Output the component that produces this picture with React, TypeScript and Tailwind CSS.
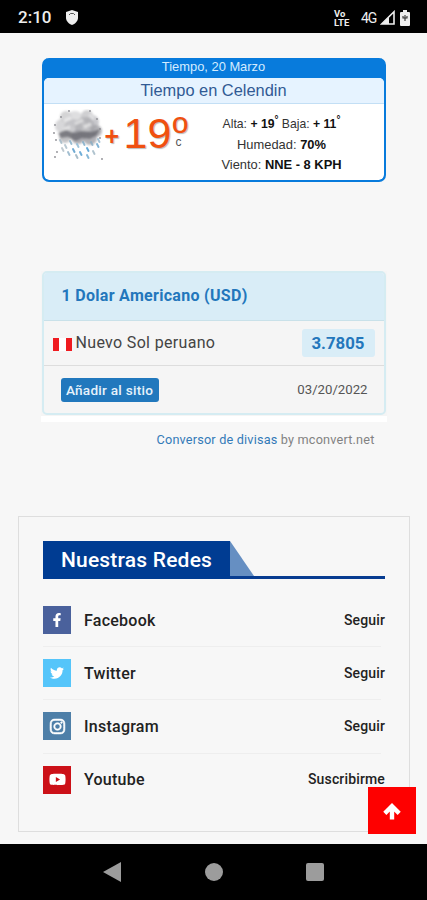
import type { ReactNode } from "react";
import { FaFacebookF, FaInstagram, FaTwitter, FaYoutube } from "react-icons/fa";

const networks: { name: string; action: string; color: string; icon: ReactNode }[] = [
  { name: "Facebook", action: "Seguir", color: "bg-[#4a619c]", icon: <FaFacebookF size={14} /> },
  { name: "Twitter", action: "Seguir", color: "bg-[#55c5fa]", icon: <FaTwitter size={14} /> },
  { name: "Instagram", action: "Seguir", color: "bg-[#4e7fa8]", icon: <FaInstagram size={17} stroke="white" strokeWidth={18} /> },
  { name: "Youtube", action: "Suscribirme", color: "bg-[#cc1118]", icon: <FaYoutube size={17} /> }
];

const puffs = [
  [13, 8, 6, "#c9c9cb"],
  [22, 10, 8, "#d6d6d8"],
  [34, 7, 6, "#c3c3c6"],
  [39, 13, 7, "#bcbcc0"],
  [9, 17, 7, "#cdcdd0"],
  [20, 19, 9, "#bebec2"],
  [32, 18, 10, "#b0b0b4"],
  [43, 22, 6, "#a2a2a8"],
  [12, 28, 6, "#b4b4b8"],
  [25, 28, 7, "#9a9aa0"],
  [37, 29, 7, "#a0a0a6"]
] as const;

const drops = [
  [7, 31, "#9fb6c4"], [12, 36, "#a9bcc8"], [17, 32, "#7fabc6"], [20, 40, "#4d96c7"],
  [24, 35, "#89b6d1"], [27, 43, "#4c9acf"], [30, 33, "#7aa9c7"], [34, 39, "#3d94cf"],
  [38, 33, "#88adc4"], [40, 42, "#9db5c3"], [44, 35, "#62a1ca"], [15, 43, "#8baec5"],
  [23, 46, "#94adbb"], [34, 46, "#6aa7cf"], [9, 39, "#b1bec6"], [45, 30, "#8fb4cb"]
] as const;

const specks = [[2, 16], [1, 24], [44, 10], [47, 20], [4, 43], [2, 48], [49, 50], [8, 8], [47, 29], [3, 31], [37, 2], [16, 2]];

function RainCloud() {
  return (
    <svg width="52" height="52" viewBox="0 0 52 52" className="mt-[5px] ml-[9px] shrink-0">
      <defs>
        <filter id="soft" x="-20%" y="-20%" width="140%" height="140%">
          <feGaussianBlur stdDeviation="1" />
        </filter>
      </defs>
      <g filter="url(#soft)">
        {puffs.map(([x, y, r, fill], i) => (
          <circle key={i} cx={x} cy={y} r={r} fill={fill} opacity=".8" />
        ))}
        <path d="m5 24 8-3 8 3 9-2 8 1 9-3-3 6-7 4-8-1-6 3-8-4-7 1Z" fill="#62626a" opacity=".72" />
        <path d="m11 12 7-3m4 6 8-4m-19 9 6-2m14 0 7-3m-2-9 5 4" fill="none" stroke="#f2f2f3" strokeWidth="3" opacity=".65" />
      </g>
      {drops.map(([x, y, stroke], i) => (
        <path key={i} d={`M${x} ${y}l1.5 3`} stroke={stroke} strokeWidth="1.9" strokeLinecap="round" opacity=".8" />
      ))}
      {specks.map(([x, y], i) => (
        <circle key={i} cx={x} cy={y} r=".9" fill="#8c8c92" />
      ))}
    </svg>
  );
}

function StatusBar() {
  return (
    <header className="flex h-[33px] shrink-0 items-center bg-black pt-[2px] pr-[17px] pl-[18px] text-[#eeeeee]">
      <span className="w-[48px] text-[17px] leading-none font-medium">2:10</span>
      <svg width="12" height="15" viewBox="0 0 12 15">
        <path d="M6 0 12 2v6c0 3-3 6-6 7-3-1-6-4-6-7V2Z" fill="#eee" />
        <path d="m3 5 1.5-1.5h3L9 5" fill="none" stroke="#444" strokeWidth=".9" />
      </svg>
      <div className="ml-auto flex items-center">
        <div className="flex h-[18px] w-[27px] flex-col text-[9.5px] leading-[9px] font-bold">
          <span>Vo</span>
          <span>LTE</span>
        </div>
        <span className="w-[19px] text-[14px] leading-none tracking-[-1px]">4G</span>
        <svg width="15" height="15" viewBox="0 0 15 15">
          <path d="M14 1.8V14H1.6Z" fill="none" stroke="#eee" strokeWidth="1.6" />
          <path d="M9 7v7H2Z" fill="#eee" />
        </svg>
        <svg width="10" height="16" viewBox="0 0 10 16" className="ml-[5px]">
          <path d="M3 0h4v2h2q1 0 1 1v12q0 1-1 1H1q-1 0-1-1V3q0-1 1-1h2Z" fill="#eee" />
          <path d="M5 5v6M3 6v2h4V6" fill="none" stroke="#333" strokeWidth="1.1" />
        </svg>
      </div>
    </header>
  );
}

function Weather() {
  return (
    <section className="mx-auto mt-[25px] h-[124px] w-[344px] shrink-0 overflow-hidden rounded-[7px] border-2 border-t-0 border-[#087bdc] bg-[#087bdc] font-['Liberation_Sans']">
      <div className="h-[20px] text-center text-[12.9px] leading-[17px] text-[#d4ecff]">Tiempo, 20 Marzo</div>
      <div className="h-[102px] overflow-hidden rounded-[5px] bg-white">
        <h2 className="h-[26px] border-b border-[#c3dff5] bg-[#e6f3ff] text-center text-[16.4px] leading-[25px] text-[#315a94]">Tiempo en Celendin</h2>
        <div className="flex">
          <RainCloud />
          <div className="flex w-[98px] text-[#f05010] [text-shadow:1px_1px_1px_#bbb]">
            <span className="mt-[16px] w-[19px] text-[25px] leading-[32px] font-bold">+</span>
            <span className="mt-[7px] w-[49px] text-[43px] leading-[44px]">19</span>
            <span className="mt-[9px] flex w-[16px] flex-col">
              <span className="h-[22px] text-[42px] leading-[38px]">º</span>
              <span className="pl-[3px] text-[12px] leading-[14px] text-[#555] [text-shadow:none]">c</span>
            </span>
          </div>
          <div className="mt-[10px] ml-auto w-[171px] pr-[33px] text-center text-[12.9px] leading-[20.5px] whitespace-nowrap text-[#333] [&_b]:text-[#111]">
            <p className="-mx-[5px] text-[12.2px]">Alta: <b>+ 19<sup className="text-[10px]">°</sup></b> Baja: <b>+ 11<sup className="text-[10px]">°</sup></b></p>
            <p>Humedad: <b>70%</b></p>
            <p>Viento: <b>NNE - 8 KPH</b></p>
          </div>
        </div>
      </div>
    </section>
  );
}

function Converter() {
  return (
    <section className="mx-auto mt-[89px] w-[346px] shrink-0">
      <div className="h-[151px] bg-white">
        <div className="h-[145px] bg-[#f5f5f5]">
          <div className="mx-px h-[144px] overflow-hidden rounded-[5px] border-2 border-[#d5ecf2]">
            <h2 className="h-[48px] border-b border-[#c9e1e9] bg-[#d9edf7] pl-[18px] text-[16px] leading-[46px] font-bold tracking-[0.3px] text-[#2377bc]">1 Dolar Americano (USD)</h2>
            <div className="flex h-[45px] items-center border-b border-[#dddddd] pr-[9px] pl-[9px]">
              <span className="mt-[2px] mr-[4px] flex h-[13px] w-[19px] bg-white">
                <i className="mr-auto w-[6px] bg-[#ef1b20]" />
                <i className="w-[6px] bg-[#ef1b20]" />
              </span>
              <span className="text-[16px] tracking-[0.33px] text-[#444]">Nuevo Sol peruano</span>
              <b className="ml-auto h-[28px] w-[73px] rounded-[3px] bg-[#d9edf7] text-center text-[16.8px] leading-[28px] text-[#2377bc]">3.7805</b>
            </div>
            <div className="flex h-[47px] items-center pr-[16px] pl-[17px]">
              <button className="h-[24px] w-[98px] rounded-[3px] bg-[#2178bd] text-[13.6px] leading-[24px] font-medium tracking-[0.25px] whitespace-nowrap text-[#e6f2fb]">Añadir al sitio</button>
              <span className="mt-px ml-auto text-[13.2px] text-[#555]">03/20/2022</span>
            </div>
          </div>
        </div>
      </div>
      <p className="mt-[8px] pr-[12px] text-right text-[12.7px] leading-[20px] tracking-[0.18px] text-[#828282]">
        <span className="text-[#337ab7]">Conversor de divisas</span> by mconvert.net
      </p>
    </section>
  );
}

function Networks() {
  return (
    <section className="mt-[66px] mr-[17px] ml-[18px] h-[316px] shrink-0 border border-[#dedede] px-[24px] pt-[24px]">
      <div className="flex h-[38px] border-b-[3px] border-[#073c91]">
        <h2 className="h-[38px] w-[187px] bg-[#003c92] text-center text-[21px] leading-[38px] font-medium tracking-[0.2px] text-white">Nuestras Redes</h2>
        <svg width="24" height="35" viewBox="0 0 24 35">
          <path d="M0 0 24 35H0Z" fill="#668fc2" />
        </svg>
      </div>
      <ul className="mt-[15px]">
        {networks.map((network) => (
          <li key={network.name} className="mr-[4px] flex h-[53.2px] items-center border-b border-[#eeeeee] last:border-0 last:pb-px">
            <span className={`grid size-[28px] place-items-center text-white ${network.color}`}>{network.icon}</span>
            <span className="mt-px ml-[13px] text-[16px] font-medium tracking-[0.25px] text-[#222]">{network.name}</span>
            <span className="-mr-[4px] ml-auto text-[14px] font-medium tracking-[0.15px] text-[#222]">{network.action}</span>
          </li>
        ))}
      </ul>
    </section>
  );
}

export default function App() {
  return (
    <main className="relative flex h-[900px] w-[427px] flex-col overflow-hidden bg-[#f7f7f7] font-[Roboto,sans-serif]">
      <StatusBar />
      <Weather />
      <Converter />
      <Networks />
      <button className="absolute top-[787px] left-[368px] grid h-[47px] w-[48px] place-items-center bg-[#fe0000] text-white">
        <svg width="18" height="17" viewBox="0 0 18 17" className="mt-[2px]" fill="none" stroke="currentColor" strokeWidth="4.4">
          <path d="M9 16.5V3M1.8 10.4 9 3.2l7.2 7.2" />
        </svg>
      </button>
      <nav className="mt-auto flex h-[56px] shrink-0 items-center bg-black pl-[103px]">
        <svg width="18" height="20" viewBox="0 0 18 20">
          <path d="M0 10 18 0v20Z" fill="#9c9c9c" />
        </svg>
        <span className="ml-[84px] size-[18px] rounded-full bg-[#9c9c9c]" />
        <span className="ml-[83px] size-[18px] rounded-[2px] bg-[#9c9c9c]" />
      </nav>
    </main>
  );
}
